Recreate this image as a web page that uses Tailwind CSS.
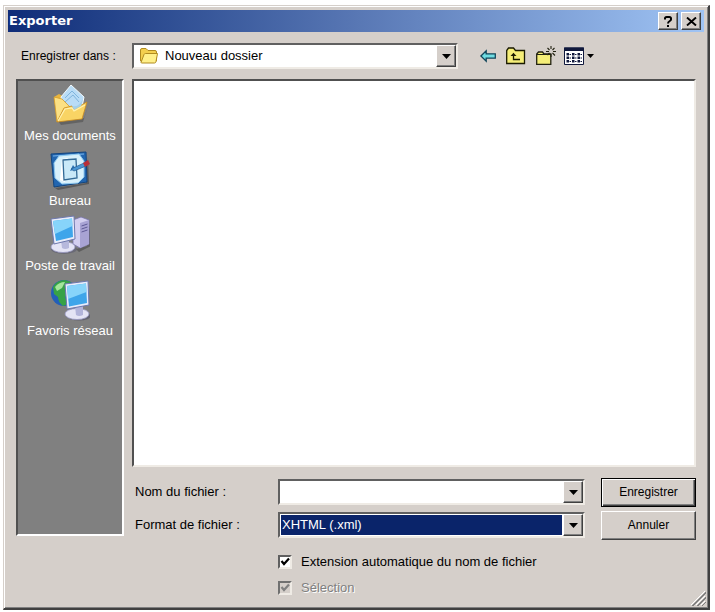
<!DOCTYPE html>
<html lang="fr">
<head>
  <meta charset="UTF-8" />
  <meta name="viewport" content="width=device-width, initial-scale=1.0" />
  <title>Exporter</title>
  <script src="https://cdn.jsdelivr.net/npm/@tailwindcss/browser@4"></script>
</head>

<body class="bg-white font-['Liberation_Sans',Arial,sans-serif] text-[13px] leading-4 text-black">

  <div class="min-h-screen flex pl-[3px] pt-[5px] pr-[5px] pb-[2px]">
    <section role="dialog" aria-labelledby="title" class="relative flex-1 flex flex-col bg-[#d5cfca] border border-t-[#d5cfca] border-l-[#d5cfca] border-b-2 border-r-2 border-b-[#404040] border-r-[#404040] shadow-[inset_1px_1px_#fff,inset_-1px_-1px_#808080] p-1">

      <!-- Title bar -->
      <header class="flex items-center h-[22px] pl-px pr-[3px] bg-linear-to-r from-[#0f2c78] via-[#5877b4] to-[#a0c4f4] text-white">
        <h1 id="title" class="flex-1 font-['DejaVu_Sans',Verdana,sans-serif] font-bold text-[13px]">Exporter</h1>
        <div class="flex gap-[3px]">
          <button type="button" aria-label="Aide" class="w-5 h-[18px] flex items-center justify-center bg-[#d5cfca] text-black border border-t-white border-l-white border-b-[#404040] border-r-[#404040] shadow-[inset_-1px_-1px_#808080]">
            <svg class="w-2 h-[11px]" viewBox="0 0 8 11" fill="none" stroke="currentColor" stroke-width="2"><path d="M1 3.5V2.6Q1 1 2.600 1H5.400Q7 1 7 2.600V3.400Q7 4.300 5.800 5Q4 6 4 7.600M4 9V11" /></svg>
          </button>
          <button type="button" aria-label="Fermer" class="w-5 h-[18px] flex items-center justify-center bg-[#d5cfca] text-black border border-t-white border-l-white border-b-[#404040] border-r-[#404040] shadow-[inset_-1px_-1px_#808080]">
            <svg class="w-[11px] h-[9px]" viewBox="0 0 11 9" fill="none" stroke="currentColor" stroke-width="1.900"><path d="M1 0.500L10 8.500M10 0.500L1 8.500" /></svg>
          </button>
        </div>
      </header>

      <form class="flex-1 flex flex-col px-2 pt-[11px] pb-[3px]">

        <!-- Folder and toolbar -->
        <div class="flex items-center">
          <label for="folder" class="w-[116px] pl-[5px] text-[12px] shrink-0">Enregistrer dans :</label>
          <div class="flex-1 flex items-center h-[26px] bg-white border-2 border-t-[#606060] border-l-[#606060] border-b-[#efebe5] border-r-[#efebe5] pl-[5px]">
            <svg class="w-5 h-[18px] shrink-0" viewBox="0 0 20 18">
              <path d="M1.500 14V3Q1.500 1.500 3 1.500H7L9 3.500H16Q17.500 3.500 17.500 5V14Z" fill="#f3cf4e" stroke="#b08b20" />
              <path d="M2 15.500L5 7.500Q5.500 6.500 6.500 6.500H18.500L17 14.500Q16.700 16 15.500 16H3Q2 16 2 15.500Z" fill="#fff08a" stroke="#b08b20" />
            </svg>
            <select id="folder" class="flex-1 appearance-none bg-transparent pl-1.5 h-full outline-none">
              <option>Nouveau dossier</option>
            </select>
            <span class="w-5 h-full flex items-center justify-center bg-[#d5cfca] border border-t-white border-l-white border-b-[#404040] border-r-[#404040] shadow-[inset_-1px_-1px_#808080]">
              <svg class="w-[9px] h-[5px]" viewBox="0 0 9 5"><path d="M0 0H9L4.500 5Z" /></svg>
            </span>
          </div>
          <div class="flex items-center w-[238px] pl-[22px] gap-[10px]">
            <button type="button" aria-label="Précédent">
              <svg class="w-4 h-[18px]" viewBox="0 0 16 18"><path d="M0.900 9L6.200 3.800V6.800H15.300V11.200H6.200V14.200Z" fill="#6fdde2" stroke="#12465a" stroke-width="1.300" /></svg>
            </button>
            <button type="button" aria-label="Dossier parent">
              <svg class="w-5 h-[18px]" viewBox="0 0 20 18" fill="none" stroke="#1a1a00">
                <path d="M0.700 16.500V3.500L2.500 1H7.500L9.500 3.500H18.500V16.500Z" fill="#f5ee78" stroke-width="1.300" />
                <path d="M7.500 8V12.500H14" stroke-width="1.300" />
                <path d="M4.500 9L7.500 5.800L10.500 9Z" fill="#1a1a00" stroke="none" />
              </svg>
            </button>
            <button type="button" aria-label="Nouveau dossier">
              <svg class="w-5 h-5" viewBox="0 0 20 20" fill="none" stroke="#222211">
                <path d="M0.700 18.300V8L2.500 6H6.500L8 8H14.800V18.300Z" fill="#f5ee78" stroke-width="1.300" />
                <path d="M1 8.500H14.500" stroke-width="1" />
                <path d="M15 0V3M15 8V11M10 5.500H13M17 5.500H20M11.500 2L13.500 4M18.500 2L16.500 4M16.500 7L19 9.500M11.500 9L13.500 7" stroke-width="1.100" />
              </svg>
            </button>
            <button type="button" aria-label="Affichage" class="flex items-center gap-[3px] -ml-0.5">
              <svg class="w-5 h-[18px]" viewBox="0 0 20 18">
                <path d="M0.500 1H19.500V17.500H0.500Z" fill="#fff" stroke="#10183c" />
                <path d="M0 0.500H20V4H0Z" fill="#10183c" />
                <path d="M2.500 6H5V8.500H2.500ZM8 6H10.500V8.500H8ZM13.500 6H16V8.500H13.500ZM2.500 9.500H5V12H2.500ZM8 9.500H10.500V12H8ZM13.500 9.500H16V12H13.500ZM2.500 13H5V15.500H2.500ZM8 13H10.500V15.500H8ZM13.500 13H16V15.500H13.500Z" fill="#10183c" />
                <path d="M5.500 7.500H7M11 7.500H12.500M16.500 7.500H18M5.500 11H7M11 11H12.500M16.500 11H18M5.500 14.500H7M11 14.500H12.500M16.500 14.500H18" stroke="#10183c" />
              </svg>
              <svg class="w-[7px] h-1" viewBox="0 0 7 4"><path d="M0 0H7L3.500 4Z" /></svg>
            </button>
          </div>
        </div>

        <div class="flex-1 flex gap-2 mt-[10px]">

          <!-- Places -->
          <nav class="w-[108px] shrink-0 mb-[65px] bg-[#808080] border-2 border-t-[#505050] border-l-[#505050] border-b-white border-r-white text-white">
            <ul class="flex flex-col gap-[3px] pt-[3px] text-center whitespace-nowrap">
              <li>
                <a href="#documents" class="flex flex-col items-center">
                  <svg class="w-10 h-[42px]" viewBox="0 0 40 42">
                    <path d="M8 37L34 34L39 19L33 38L11 41Z" fill="#505050" opacity=".6" />
                    <path d="M4 13L9 10L14 13L31 16L33 34L7 37Z" fill="#e9b53d" />
                    <path d="M11 13L21 1L34 13L31 28L14 31Z" fill="#b9dcf6" stroke="#f3fbff" />
                    <path d="M15 14L22 7L29 14M15 18L23 11L29 18" fill="none" stroke="#7fb4dc" />
                    <path d="M4 13L7 38L14 25L20 23L12 15Z" fill="#fbe084" stroke="#d49a26" stroke-width=".8" />
                    <path d="M7 38L14 24L22 22L24 25L37 18L32 35Z" fill="#f9d464" stroke="#c98a1d" stroke-width=".8" />
                    <path d="M22 22Q28 24 33 15L31 22L24 26Z" fill="#a4cfe8" />
                    <path d="M8 37L15 25L22 24L24 27L35 21" fill="none" stroke="#fff2b0" stroke-width="1.200" />
                  </svg>
                  <span class="leading-5">Mes documents</span>
                </a>
              </li>
              <li>
                <a href="#bureau" class="flex flex-col items-center">
                  <svg class="w-10 h-[42px]" viewBox="0 0 40 42">
                    <path d="M5 39L36 34L38 8L39 35L8 41Z" fill="#484848" opacity=".7" />
                    <path d="M1 5L36 3L37 33L4 38Z" fill="#2266b0" stroke="#12457f" />
                    <path d="M3 7L34 5" stroke="#7ab6ea" />
                    <path d="M9 7L29 5L34 12L34 28L28 34L12 35L5 29L4 14Z" fill="#d7f0fb" stroke="#8fc9ee" />
                    <path d="M12 10L18 9L15 33L10 31Z" fill="#fff" />
                    <path d="M13 11L26 10L27 29L14 31Z" fill="#c9e9f8" stroke="#336a96" stroke-width="1.300" />
                    <path d="M20 22L23 16L26 20Z" fill="#2a72b5" />
                    <path d="M21 20L34 14L36 17L24 22Z" fill="#4a96d4" stroke="#235b92" stroke-width=".7" />
                    <path d="M33 14L38 11L40 15L35 18Z" fill="#b82f38" />
                  </svg>
                  <span class="leading-5">Bureau</span>
                </a>
              </li>
              <li>
                <a href="#poste" class="flex flex-col items-center">
                  <svg class="w-10 h-[42px]" viewBox="0 0 40 42">
                    <path d="M26 35L37 32L40 10L41 32L29 38Z" fill="#484848" opacity=".6" />
                    <path d="M23 6L31 3L39 6L39 30L30 34L23 30Z" fill="#d3cff0" stroke="#7773ac" stroke-width=".8" />
                    <path d="M30 9L39 6L39 30L30 34Z" fill="#a8a3d4" />
                    <path d="M31.500 12L37.500 10M31.500 15L37.500 13M31.500 18L37.500 16" stroke="#5f5a96" />
                    <ellipse cx="14" cy="35" rx="13" ry="5" fill="#5b5b70" opacity=".6" />
                    <ellipse cx="13" cy="33" rx="12" ry="5.500" fill="#e4e4f5" stroke="#9595bf" stroke-width=".8" />
                    <path d="M11 26H19V34Q15 36 12 34Z" fill="#b6b8dc" />
                    <path d="M1 5L24 2L25 25L4 30Z" fill="#e8ecfa" stroke="#6e78ad" />
                    <path d="M3 7L22 4.500L23 23L6 27Z" fill="#3ea5ea" />
                    <path d="M3 7L22 4.500L22.500 12L5 20Z" fill="#87d4fa" />
                  </svg>
                  <span class="leading-5">Poste de travail</span>
                </a>
              </li>
              <li>
                <a href="#reseau" class="flex flex-col items-center">
                  <svg class="w-10 h-[42px]" viewBox="0 0 40 42">
                    <circle cx="14" cy="14" r="13" fill="#235fb8" />
                    <path d="M3 8Q7 1 15 1L21 3L18 8L20 13L15 18L18 25L13 27Q8 23 8 18L4 15Z" fill="#37a246" />
                    <path d="M5 8Q9 3 15 3L12 9L7 12Z" fill="#a4e69b" />
                    <ellipse cx="29" cy="37" rx="12" ry="4.500" fill="#505064" opacity=".6" />
                    <ellipse cx="27" cy="35" rx="12" ry="5.500" fill="#e4e4f5" stroke="#9595bf" stroke-width=".8" />
                    <path d="M25 27H33V36Q29 38 26 36Z" fill="#b2b4da" />
                    <path d="M15 5L38 2L39 26L17 30Z" fill="#e8ecfa" stroke="#6e78ad" />
                    <path d="M17 7L36 4.500L37 24L19 27.500Z" fill="#3ea5ea" />
                    <path d="M17 7L36 4.500L36.500 13L18 20Z" fill="#87d4fa" />
                  </svg>
                  <span class="leading-5">Favoris réseau</span>
                </a>
              </li>
            </ul>
          </nav>

          <div class="flex-1 flex flex-col">
            <!-- File list -->
            <div class="flex-1 bg-white border-2 border-t-[#505050] border-l-[#505050] border-b-[#efebe5] border-r-[#efebe5]"></div>

            <!-- File name, format, options -->
            <div class="grid grid-cols-[146px_1fr_111px] auto-rows-[30px] gap-y-[3px] items-center mt-[10px]">
              <label for="filename" class="pl-[3px]">Nom du fichier :</label>
              <div class="flex h-[26px] bg-white border-2 border-t-[#606060] border-l-[#606060] border-b-[#efebe5] border-r-[#efebe5]">
                <input id="filename" type="text" class="flex-1 min-w-0 px-0.5 outline-none" />
                <button type="button" aria-label="Noms récents" class="w-5 flex items-center justify-center bg-[#d5cfca] border border-t-white border-l-white border-b-[#404040] border-r-[#404040] shadow-[inset_-1px_-1px_#808080]">
                  <svg class="w-[9px] h-[5px]" viewBox="0 0 9 5"><path d="M0 0H9L4.500 5Z" /></svg>
                </button>
              </div>
              <button type="submit" class="ml-4 h-[29px] bg-[#d5cfca] text-[12px] border border-black shadow-[inset_1px_1px_#fff,inset_-1px_-1px_#404040,inset_-2px_-2px_#808080]">Enregistrer</button>

              <label for="format" class="pl-[3px]">Format de fichier :</label>
              <div class="flex h-[26px] bg-white border-2 border-t-[#606060] border-l-[#606060] border-b-[#efebe5] border-r-[#efebe5]">
                <select id="format" class="flex-1 min-w-0 appearance-none m-px bg-[#0a246a] text-white pl-px outline-none">
                  <option>XHTML (.xml)</option>
                </select>
                <span class="w-5 flex items-center justify-center bg-[#d5cfca] border border-t-white border-l-white border-b-[#404040] border-r-[#404040] shadow-[inset_-1px_-1px_#808080]">
                  <svg class="w-[9px] h-[5px]" viewBox="0 0 9 5"><path d="M0 0H9L4.500 5Z" /></svg>
                </span>
              </div>
              <button type="button" class="ml-4 h-[29px] bg-[#d5cfca] text-[12px] border border-t-white border-l-white border-b-[#404040] border-r-[#404040] shadow-[inset_-1px_-1px_#808080]">Annuler</button>
            </div>

            <div class="flex flex-col ml-[146px] mt-[9px]">
              <label class="flex items-center gap-[9px] h-[26px]">
                <span class="grid w-[14px] h-[14px] shrink-0">
                  <input type="checkbox" checked class="peer col-start-1 row-start-1 appearance-none bg-white border-2 border-t-[#606060] border-l-[#606060] border-b-[#efebe5] border-r-[#efebe5]" />
                  <svg class="col-start-1 row-start-1 w-[14px] h-[14px] pointer-events-none invisible peer-checked:visible" viewBox="0 0 14 14" fill="none" stroke="#000" stroke-width="2.200"><path d="M3.500 6L6 9L11 3.500" /></svg>
                </span>
                Extension automatique du nom de fichier
              </label>
              <label class="flex items-center gap-[9px] h-[26px] text-[#808080] text-shadow-[1px_1px_#fff]">
                <span class="grid w-[14px] h-[14px] shrink-0">
                  <input type="checkbox" checked disabled class="peer col-start-1 row-start-1 appearance-none bg-[#d5cfca] border-2 border-t-[#707070] border-l-[#707070] border-b-[#efebe5] border-r-[#efebe5]" />
                  <svg class="col-start-1 row-start-1 w-[14px] h-[14px] pointer-events-none invisible peer-checked:visible" viewBox="0 0 14 14" fill="none" stroke="#808080" stroke-width="2.200"><path d="M3.500 6L6 9L11 3.500" /></svg>
                </span>
                Sélection
              </label>
            </div>
          </div>
        </div>
      </form>

      <!-- Resize grip -->
      <svg class="absolute right-0.5 bottom-0.5 w-[15px] h-[15px]" viewBox="0 0 15 15" fill="none">
        <path d="M0 14L14 0M5 14L14 5M10 14L14 10" stroke="#fff" />
        <path d="M1 15L15 1M2 15L15 2M6 15L15 6M7 15L15 7M11 15L15 11" stroke="#808080" />
      </svg>
    </section>
  </div>

</body>

</html>
